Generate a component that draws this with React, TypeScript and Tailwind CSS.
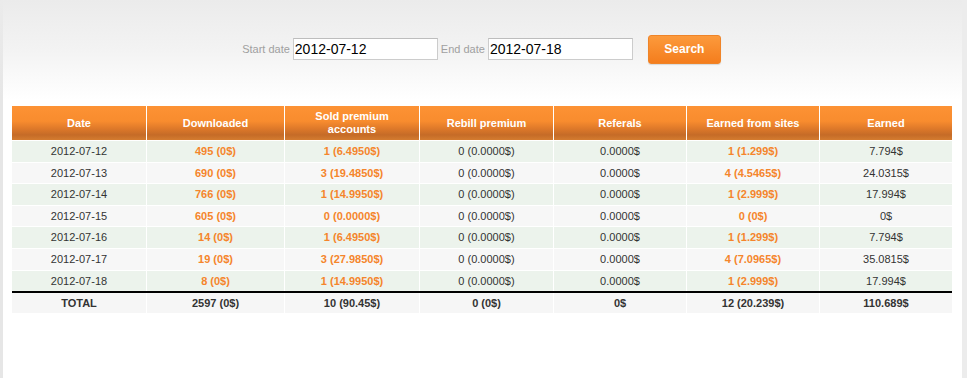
const rows = [
  { date: '2012-07-12', dl: '495 (0$)', sold: '1 (6.4950$)', rebill: '0 (0.0000$)', ref: '0.0000$', sites: '1 (1.299$)', earned: '7.794$' },
  { date: '2012-07-13', dl: '690 (0$)', sold: '3 (19.4850$)', rebill: '0 (0.0000$)', ref: '0.0000$', sites: '4 (4.5465$)', earned: '24.0315$' },
  { date: '2012-07-14', dl: '766 (0$)', sold: '1 (14.9950$)', rebill: '0 (0.0000$)', ref: '0.0000$', sites: '1 (2.999$)', earned: '17.994$' },
  { date: '2012-07-15', dl: '605 (0$)', sold: '0 (0.0000$)', rebill: '0 (0.0000$)', ref: '0.0000$', sites: '0 (0$)', earned: '0$' },
  { date: '2012-07-16', dl: '14 (0$)', sold: '1 (6.4950$)', rebill: '0 (0.0000$)', ref: '0.0000$', sites: '1 (1.299$)', earned: '7.794$' },
  { date: '2012-07-17', dl: '19 (0$)', sold: '3 (27.9850$)', rebill: '0 (0.0000$)', ref: '0.0000$', sites: '4 (7.0965$)', earned: '35.0815$' },
  { date: '2012-07-18', dl: '8 (0$)', sold: '1 (14.9950$)', rebill: '0 (0.0000$)', ref: '0.0000$', sites: '1 (2.999$)', earned: '17.994$' },
];

const total = ['TOTAL', '2597 (0$)', '10 (90.45$)', '0 (0$)', '0$', '12 (20.239$)', '110.689$'];

const grid = 'grid grid-cols-[134px_137px_134px_133px_132px_132px_132px] gap-x-px';

function Head({ children }: { children: React.ReactNode }) {
  return (
    <div className="flex items-center justify-center text-center text-[11px] font-bold leading-[13px] text-white bg-[linear-gradient(to_bottom,#fd9234_0%,#f88c2e_45%,#e07a2a_65%,#c56b27_85%,#d47c30_100%)]">
      {children}
    </div>
  );
}

export default function App() {
  return (
    <div className="flex h-[378px] w-[967px] bg-[linear-gradient(to_bottom,#ebebeb_0px,#f3f3f3_50px,#ffffff_100px)] font-['Liberation_Sans',Arial,sans-serif]">
      <div className="w-[3px] shrink-0 bg-[linear-gradient(to_bottom,#ebebeb_0px,#e6e6e6_100px)]" />
      <div className="flex-1 pl-[9px] pr-[10px]">
        <div className="flex h-[99px] items-center justify-center pb-[1px] pr-[1px]">
          <div className="flex items-center">
            <span className="mr-[3px] text-[11px] text-[#a0a0a0]">Start date</span>
            <input
              defaultValue="2012-07-12"
              className="h-[22px] w-[145px] border border-[#cccccc] border-t-[#bdbdbd] bg-white px-[1px] text-[14px] text-black outline-none"
            />
            <span className="ml-[3px] mr-[3px] text-[11px] text-[#a0a0a0]">End date</span>
            <input
              defaultValue="2012-07-18"
              className="h-[22px] w-[145px] border border-[#cccccc] border-t-[#bdbdbd] bg-white px-[1px] text-[14px] text-black outline-none"
            />
            <button className="ml-[15px] h-[29px] w-[73px] rounded-[3px] border border-[#ef8428] bg-[linear-gradient(to_bottom,#fc9a3c,#f47d1d)] text-[12px] font-bold text-white shadow-[0_1px_1px_rgba(0,0,0,0.12)]">
              Search
            </button>
          </div>
        </div>
        <div className="w-[940px] pt-[7px]">
          <div className={`${grid} h-[34px]`}>
            <Head>Date</Head>
            <Head>Downloaded</Head>
            <Head>Sold premium<br />accounts</Head>
            <Head>Rebill premium</Head>
            <Head>Referals</Head>
            <Head>Earned from sites</Head>
            <Head>Earned</Head>
          </div>
          {rows.map((r, i) => (
            <div key={r.date} className={`${grid} mt-px h-[20.6px] bg-white text-[11px]`}>
              {[r.date, r.dl, r.sold, r.rebill, r.ref, r.sites, r.earned].map((v, j) => (
                <div
                  key={j}
                  className={`flex items-center justify-center ${i % 2 === 0 ? 'bg-[#ecf3ec]' : 'bg-[#f7f7f7]'} ${
                    j === 1 || j === 2 || j === 5 ? 'font-bold text-[#f5852b]' : 'text-[#333333]'
                  }`}
                >
                  {v}
                </div>
              ))}
            </div>
          ))}
          <div className="h-[2px] bg-black" />
          <div className={`${grid} h-[20px] bg-white text-[11px] font-bold text-[#333333]`}>
            {total.map((v, j) => (
              <div key={j} className="flex items-center justify-center bg-[#f6f6f6]">
                {v}
              </div>
            ))}
          </div>
        </div>
      </div>
      <div className="w-[5px] shrink-0 bg-[#ececec]" />
    </div>
  );
}
